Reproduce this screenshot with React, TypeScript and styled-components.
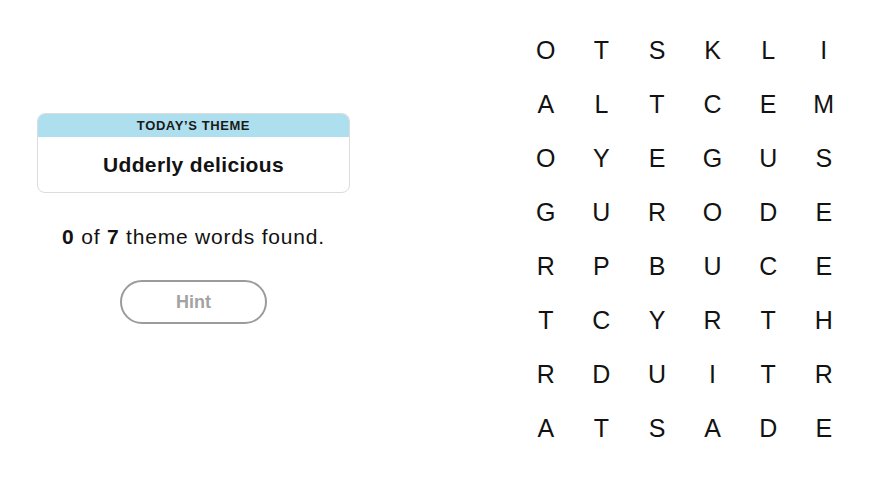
import styled, { createGlobalStyle } from "styled-components";

const GlobalStyle = createGlobalStyle`
  html, body {
    margin: 0;
    padding: 0;
    background: #ffffff;
  }
  body {
    font-family: "Liberation Sans", Arial, sans-serif;
    color: #121212;
  }
`;

const letters = [
  "OTSKLI",
  "ALTCEM",
  "OYEGUS",
  "GURODE",
  "RPBUCE",
  "TCYRTH",
  "RDUITR",
  "ATSADE",
];

const Page = styled.div`
  width: 879px;
  height: 483px;
  display: flex;
  align-items: flex-start;
  padding-left: 37px;
  box-sizing: border-box;
`;

const LeftPanel = styled.div`
  width: 313px;
  padding-top: 113px;
  display: flex;
  flex-direction: column;
  align-items: center;
`;

const ThemeCard = styled.div`
  width: 100%;
  border: 1px solid #dcdcdc;
  border-radius: 8px;
  overflow: hidden;
  box-sizing: border-box;
`;

const ThemeHeader = styled.div`
  height: 23px;
  background: #aedfee;
  display: flex;
  align-items: center;
  justify-content: center;
  font-size: 13px;
  font-weight: 700;
  letter-spacing: 0.6px;
  color: #1a1a1a;
`;

const ThemeTitle = styled.div`
  height: 55px;
  display: flex;
  align-items: center;
  justify-content: center;
  font-size: 21px;
  font-weight: 700;
  letter-spacing: 0.35px;
  color: #121212;
`;

const FoundText = styled.p`
  margin: 32px 0 0;
  font-size: 21px;
  letter-spacing: 0.8px;
  color: #121212;

  b {
    font-weight: 700;
  }
`;

const HintButton = styled.button`
  margin-top: 31px;
  width: 147px;
  height: 44px;
  border: 2px solid #9b9b9b;
  border-radius: 22px;
  background: #ffffff;
  color: #a3a3a3;
  font-family: "Liberation Sans", Arial, sans-serif;
  font-size: 18px;
  font-weight: 700;
`;

const Board = styled.div`
  margin-left: 168px;
  margin-top: 23px;
  display: grid;
  grid-template-columns: repeat(6, 55.6px);
  grid-auto-rows: 54px;
`;

const Letter = styled.div`
  display: flex;
  align-items: center;
  justify-content: center;
  font-size: 25px;
  font-weight: 400;
  color: #121212;
`;

export default function App() {
  return (
    <Page>
      <GlobalStyle />
      <LeftPanel>
        <ThemeCard>
          <ThemeHeader>TODAY’S THEME</ThemeHeader>
          <ThemeTitle>Udderly delicious</ThemeTitle>
        </ThemeCard>
        <FoundText>
          <b>0</b> of <b>7</b> theme words found.
        </FoundText>
        <HintButton>Hint</HintButton>
      </LeftPanel>
      <Board>
        {letters.map((row, r) =>
          row.split("").map((ch, c) => <Letter key={`${r}-${c}`}>{ch}</Letter>)
        )}
      </Board>
    </Page>
  );
}
